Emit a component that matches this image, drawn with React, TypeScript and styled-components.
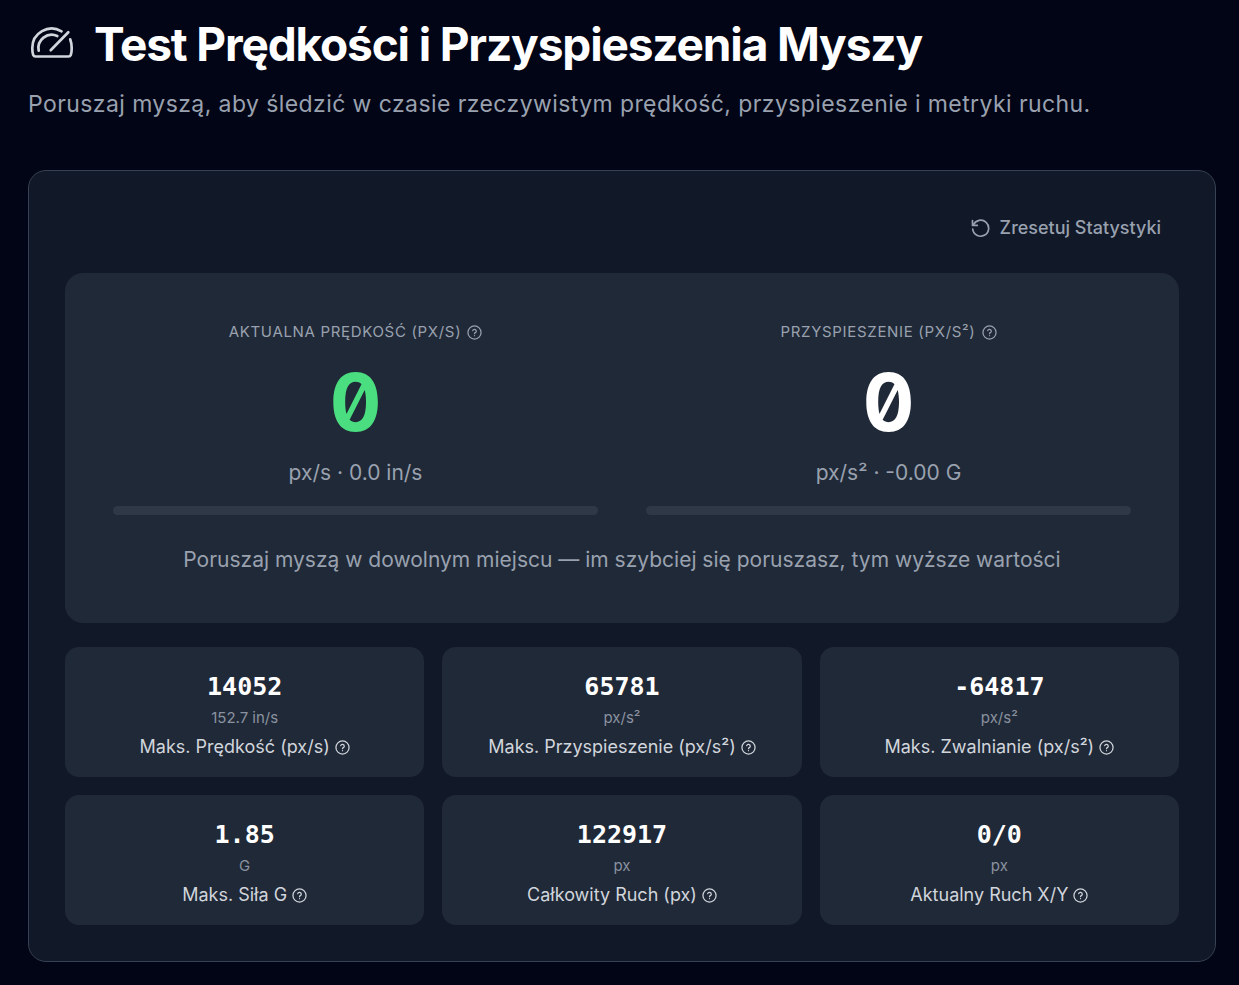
import React from "react";
import styled, { createGlobalStyle } from "styled-components";

const Global = createGlobalStyle`
  *, *::before, *::after { box-sizing: border-box; }
  body { margin: 0; background: #020515; color: #fff; font-family: Inter, sans-serif; }
  h1, p, h2 { margin: 0; }
`;

const Page = styled.main`
  padding: 16px 23px 22px 28px;
`;

const Header = styled.header`
  display: flex;
  flex-direction: column;
  gap: 14px;
  margin-bottom: 48px;
`;

const TitleRow = styled.div`
  display: flex;
  align-items: center;
  gap: 18px;
`;

const Title = styled.h1`
  font-size: 46px;
  line-height: 56px;
  font-weight: 700;
  letter-spacing: -0.025em;
`;

const Subtitle = styled.p`
  font-size: 23px;
  line-height: 36px;
  letter-spacing: 0.018em;
  color: #99a1af;
`;

const Card = styled.section`
  display: flex;
  flex-direction: column;
  gap: 24px;
  padding: 36px;
  border: 1px solid #364153;
  border-radius: 18px;
  background: #111827;
`;

const ResetButton = styled.button`
  display: flex;
  align-items: center;
  align-self: flex-end;
  gap: 9px;
  padding: 9px 18px;
  border: 0;
  background: transparent;
  color: #99a1af;
  font: 500 18px/24px Inter, sans-serif;
  cursor: pointer;
`;

const Panel = styled.div`
  display: flex;
  flex-direction: column;
  gap: 29px;
  padding: 48px;
  border-radius: 18px;
  background: #202937;
`;

const Gauges = styled.div`
  display: grid;
  grid-template-columns: 1fr 1fr;
  gap: 48px;
`;

const Gauge = styled.div`
  display: flex;
  flex-direction: column;
  align-items: center;
`;

const GaugeLabel = styled.h2`
  display: flex;
  align-items: center;
  gap: 6px;
  font-size: 15px;
  line-height: 22px;
  font-weight: 400;
  letter-spacing: 0.045em;
  text-transform: uppercase;
  color: #99a1af;
`;

const GaugeValue = styled.output<{ $color: string }>`
  margin-top: 14px;
  font-family: Inter, sans-serif;
  font-feature-settings: "zero" 1, "tnum" 1;
  font-size: 80px;
  line-height: 90px;
  font-weight: 700;
  color: ${(p) => p.$color};
`;

const GaugeUnit = styled.p`
  margin-top: 10px;
  font-size: 21px;
  line-height: 32px;
  color: #99a1af;
`;

const Bar = styled.div`
  width: 100%;
  height: 9px;
  margin-top: 17px;
  border-radius: 9px;
  background: #2f3846;
`;

const Hint = styled.p`
  font-size: 21px;
  line-height: 31px;
  text-align: center;
  color: #99a1af;
`;

const Stats = styled.div`
  display: grid;
  grid-template-columns: repeat(3, 1fr);
  gap: 18px;
`;

const Stat = styled.div`
  display: flex;
  flex-direction: column;
  align-items: center;
  padding: 22px 18px 14px;
  border-radius: 14px;
  background: #202937;
`;

const StatValue = styled.output`
  font-family: "DejaVu Sans Mono", monospace;
  font-size: 25px;
  line-height: 36px;
  font-weight: 700;
`;

const StatUnit = styled.span`
  font-size: 15px;
  line-height: 26px;
  color: #8a92a0;
`;

const StatLabel = styled.span`
  display: flex;
  align-items: center;
  gap: 5px;
  font-size: 18px;
  line-height: 32px;
  color: #d1d5dc;
`;

const HelpIcon = () => (
  <svg width="15" height="15" viewBox="0 0 24 24" fill="none" stroke="currentColor" strokeWidth="2" strokeLinecap="round" strokeLinejoin="round" aria-hidden="true">
    <circle cx="12" cy="12" r="10.500" />
    <path d="M9.1 9a3 3 0 0 1 5.8 1c0 2-2.9 2.300-2.900 3.800" />
    <path d="M12 17h.01" />
  </svg>
);

const ResetIcon = () => (
  <svg width="20" height="20" viewBox="0 0 20 20" fill="none" stroke="currentColor" strokeWidth="1.700" strokeLinecap="round" strokeLinejoin="round" aria-hidden="true">
    <path d="M1.500 2.600v4.800h4.800" />
    <path d="M2.300 7A8 8 0 1 1 1.700 11.200" />
  </svg>
);

const SpeedIcon = () => (
  <svg width="48" height="48" viewBox="0 -1 48 48" fill="none" stroke="#d1d5dc" strokeWidth="2.700" strokeLinecap="round" strokeLinejoin="round" aria-hidden="true">
    <path d="M33.500 10.300A19.300 19.300 0 0 0 4.300 27c0 3.300.3 5.500.9 7q.6 1.500 2.300 1.500H40.500q1.700 0 2.300-1.500c.6-1.500.9-3.700.9-7 0-3.200-.5-6-1.500-8.700" />
    <path d="M10.700 29.700A13.300 13.300 0 0 1 29.300 15" />
    <path d="M22.700 29.300 40.300 11.200" />
  </svg>
);

const stats = [
  { value: "14052", unit: "152.7 in/s", label: "Maks. Prędkość (px/s)" },
  { value: "65781", unit: "px/s²", label: "Maks. Przyspieszenie (px/s²)" },
  { value: "-64817", unit: "px/s²", label: "Maks. Zwalnianie (px/s²)" },
  { value: "1.85", unit: "G", label: "Maks. Siła G" },
  { value: "122917", unit: "px", label: "Całkowity Ruch (px)" },
  { value: "0/0", unit: "px", label: "Aktualny Ruch X/Y" },
];

export default function App() {
  return (
    <Page>
      <Global />
      <Header>
        <TitleRow>
          <SpeedIcon />
          <Title>Test Prędkości i Przyspieszenia Myszy</Title>
        </TitleRow>
        <Subtitle>Poruszaj myszą, aby śledzić w czasie rzeczywistym prędkość, przyspieszenie i metryki ruchu.</Subtitle>
      </Header>
      <Card>
        <ResetButton type="button">
          <ResetIcon />
          Zresetuj Statystyki
        </ResetButton>
        <Panel>
          <Gauges>
            <Gauge>
              <GaugeLabel>Aktualna Prędkość (px/s) <HelpIcon /></GaugeLabel>
              <GaugeValue $color="#4ade80">0</GaugeValue>
              <GaugeUnit>px/s · 0.0 in/s</GaugeUnit>
              <Bar />
            </Gauge>
            <Gauge>
              <GaugeLabel>Przyspieszenie (px/s²) <HelpIcon /></GaugeLabel>
              <GaugeValue $color="#ffffff">0</GaugeValue>
              <GaugeUnit>px/s² · -0.00 G</GaugeUnit>
              <Bar />
            </Gauge>
          </Gauges>
          <Hint>Poruszaj myszą w dowolnym miejscu — im szybciej się poruszasz, tym wyższe wartości</Hint>
        </Panel>
        <Stats>
          {stats.map((s) => (
            <Stat key={s.label}>
              <StatValue>{s.value}</StatValue>
              <StatUnit>{s.unit}</StatUnit>
              <StatLabel>{s.label} <HelpIcon /></StatLabel>
            </Stat>
          ))}
        </Stats>
      </Card>
    </Page>
  );
}
